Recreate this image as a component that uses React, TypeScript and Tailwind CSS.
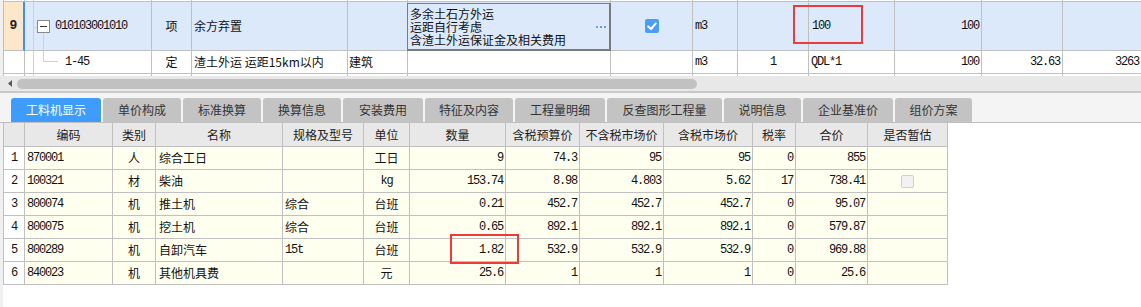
import React from "react";

const CJK = "font-['Noto_Sans_CJK_SC',sans-serif] text-[12px] text-[#111]";
const MONO = "font-['Liberation_Mono','Noto_Sans_CJK_SC',monospace] text-[12px] tracking-[-1.2px] text-[#111]";
const CELL = "border-r border-b border-[#c0c0c0] flex items-center overflow-hidden whitespace-nowrap";
const TOPGRID = "grid grid-cols-[3px_22px_127px_40px_156px_60px_203px_82px_45px_71px_86px_87px_81px_79px]";
const BOTGRID = "grid grid-cols-[3px_22px_88px_43px_127px_81px_46px_96px_74px_84px_89px_43px_72px_80px]";

const tabs: [string, string][] = [
  ["工料机显示", "w-[90px]"],
  ["单价构成", "w-[78px]"],
  ["标准换算", "w-[78px]"],
  ["换算信息", "w-[78px]"],
  ["安装费用", "w-[80px]"],
  ["特征及内容", "w-[88px]"],
  ["工程量明细", "w-[90px]"],
  ["反查图形工程量", "w-[115px]"],
  ["说明信息", "w-[77px]"],
  ["企业基准价", "w-[90px]"],
  ["组价方案", "w-[77px]"],
];

const headers = ["编码", "类别", "名称", "规格及型号", "单位", "数量", "含税预算价", "不含税市场价", "含税市场价", "税率", "合价", "是否暂估"];

const rows = [
  ["1", "870001", "人", "综合工日", "", "工日", "9", "74.3", "95", "95", "0", "855", ""],
  ["2", "100321", "材", "柴油", "", "kg", "153.74", "8.98", "4.803", "5.62", "17", "738.41", "cb"],
  ["3", "800074", "机", "推土机", "综合", "台班", "0.21", "452.7", "452.7", "452.7", "0", "95.07", ""],
  ["4", "800075", "机", "挖土机", "综合", "台班", "0.65", "892.1", "892.1", "892.1", "0", "579.87", ""],
  ["5", "800289", "机", "自卸汽车", "15t", "台班", "1.82", "532.9", "532.9", "532.9", "0", "969.88", ""],
  ["6", "840023", "机", "其他机具费", "", "元", "25.6", "1", "1", "1", "0", "25.6", ""],
];

function VLine() {
  return <div className="absolute left-[8px] top-0 bottom-0 w-px bg-[#fbc98c]" />;
}

function Check() {
  return (
    <div className="w-[14px] h-[14px] rounded-[2px] bg-[#4a9df5] flex items-center justify-center">
      <svg width="14" height="14" viewBox="0 0 14 14">
        <path d="M3.2 7.4 L6 10 L10.8 4.4" stroke="white" strokeWidth="2" fill="none" strokeLinecap="round" strokeLinejoin="round" />
      </svg>
    </div>
  );
}

function TopSection() {
  const emptyCells = (n: number, cls: string) =>
    Array.from({ length: n }).map((_, i) => <div key={i} className={`${CELL} ${cls}`} />);
  return (
    <div className="relative w-[1141px] overflow-hidden">
      {/* previous row sliver */}
      <div className={`${TOPGRID} h-[2px]`}>
        <div className="bg-[#f0f0f0]" />
        <div className={`${CELL} border-l bg-white`} />
        <div className={`${CELL} relative bg-white`}><VLine /></div>
        {emptyCells(11, "bg-white")}
      </div>
      {/* row 9 */}
      <div className={`${TOPGRID} h-[49px]`}>
        <div className="bg-[#f0f0f0]" />
        <div className="border-l border-b border-[#c0c0c0] border-r-2 border-r-[#3d8ff5] bg-[#fde7cb] flex items-center justify-center">
          <span className="font-['Liberation_Mono',monospace] text-[13px] font-bold text-[#222]">9</span>
        </div>
        <div className={`${CELL} relative bg-[#dce9fb] pl-[30px]`}>
          <VLine />
          <div className="absolute left-[8px] top-[25px] w-[4px] h-px bg-[#fbc98c]" />
          <div className="absolute left-[18px] top-[31px] bottom-0 w-px bg-[#fbc98c]" />
          <div className="absolute left-[12px] top-[18px] w-[13px] h-[13px] border border-[#8a8a8a] bg-white flex items-center justify-center">
            <div className="w-[7px] h-px bg-[#333]" />
          </div>
          <span className={MONO}>010103001010</span>
        </div>
        <div className={`${CELL} bg-[#dce9fb] justify-center`}><span className={CJK}>项</span></div>
        <div className={`${CELL} bg-[#dce9fb] pl-[2px]`}><span className={CJK}>余方弃置</span></div>
        <div className={`${CELL} bg-[#dce9fb]`} />
        <div className={`${CELL} bg-[#dce9fb] relative !overflow-visible`}>
          <div className="absolute left-[-1px] top-[1px] right-[-1px] bottom-[-1px] border-2 border-[#7b7b7b] border-l border-t pl-[2px] pt-[3px] flex flex-col">
            <span className={`${CJK} leading-[13px]`}>多余土石方外运</span>
            <span className={`${CJK} leading-[13px]`}>运距自行考虑</span>
            <span className={`${CJK} leading-[13px]`}>含渣土外运保证金及相关费用</span>
            <div className="absolute right-[3px] top-[22px] flex gap-[2px]">
              <div className="w-[2px] h-[2px] bg-[#6a9fd6]" />
              <div className="w-[2px] h-[2px] bg-[#6a9fd6]" />
              <div className="w-[2px] h-[2px] bg-[#6a9fd6]" />
            </div>
          </div>
        </div>
        <div className={`${CELL} bg-[#dce9fb] justify-center`}><Check /></div>
        <div className={`${CELL} bg-[#dce9fb] pl-[2px]`}><span className={MONO}>m3</span></div>
        <div className={`${CELL} bg-[#dce9fb]`} />
        <div className={`${CELL} bg-[#dce9fb] pl-[3px]`}><span className={MONO}>100</span></div>
        <div className={`${CELL} bg-[#dce9fb] justify-end pr-[2px]`}><span className={MONO}>100</span></div>
        <div className={`${CELL} bg-[#dce9fb]`} />
        <div className={`${CELL} bg-[#dce9fb]`} />
      </div>
      {/* row 1-45 */}
      <div className={`${TOPGRID} h-[23px]`}>
        <div className="bg-[#f0f0f0]" />
        <div className={`${CELL} border-l bg-white`} />
        <div className={`${CELL} relative bg-white pl-[40px]`}>
          <VLine />
          <div className="absolute left-[18px] top-0 h-[11px] w-px bg-[#fbc98c]" />
          <div className="absolute left-[18px] top-[10px] w-[15px] h-px bg-[#fbc98c]" />
          <span className={MONO}>1-45</span>
        </div>
        <div className={`${CELL} bg-white justify-center`}><span className={CJK}>定</span></div>
        <div className={`${CELL} bg-white pl-[2px]`}><span className={CJK}>渣土外运 运距15km以内</span></div>
        <div className={`${CELL} bg-white pl-[1px]`}><span className={CJK}>建筑</span></div>
        <div className={`${CELL} bg-white`} />
        <div className={`${CELL} bg-white`} />
        <div className={`${CELL} bg-white pl-[2px]`}><span className={MONO}>m3</span></div>
        <div className={`${CELL} bg-white justify-center`}><span className={MONO}>1</span></div>
        <div className={`${CELL} bg-white pl-[2px]`}><span className={MONO}>QDL*1</span></div>
        <div className={`${CELL} bg-white justify-end pr-[2px]`}><span className={MONO}>100</span></div>
        <div className={`${CELL} bg-white justify-end pr-[2px]`}><span className={MONO}>32.63</span></div>
        <div className={`${CELL} bg-white justify-end pr-[2px]`}><span className={MONO}>3263</span></div>
      </div>
      {/* next row sliver */}
      <div className={`${TOPGRID} h-[2px]`}>
        <div className="bg-[#f0f0f0]" />
        <div className="border-l border-r border-[#c0c0c0] bg-white" />
        <div className="border-r border-[#c0c0c0] relative bg-white"><VLine /></div>
        {Array.from({ length: 11 }).map((_, i) => (
          <div key={i} className="border-r border-[#c0c0c0] bg-white" />
        ))}
      </div>
      {/* horizontal scrollbar */}
      <div className="h-[15px] bg-[#e8e8e8] flex items-center">
        <svg width="4" height="7" viewBox="0 0 4 7" className="ml-[8px]">
          <path d="M4 0 L0 3.5 L4 7 Z" fill="#5a5a5a" />
        </svg>
        <div className="ml-[5px] w-[680px] h-[10px] rounded-full bg-[#c1c1c1]" />
      </div>
      {/* annotation */}
      <div className="absolute left-[793px] top-[5px] w-[70px] h-[39px] border-2 border-[#f03a3a]" />
    </div>
  );
}

function TabBar() {
  return (
    <div className="border-t-2 border-[#c8c8c8] border-b border-b-[#c0c0c0] bg-[#f4f4f4] pt-[5px] pl-[11px] flex gap-[2px]">
      {tabs.map(([t, w], i) => (
        <div
          key={t}
          className={`${w} h-[24px] rounded-t-[3px] flex items-center justify-center font-['Noto_Sans_CJK_SC',sans-serif] text-[12px] ${
            i === 0 ? "bg-[#3f9cff] text-white" : "bg-[#c3c3c3] text-[#333]"
          }`}
        >
          {t}
        </div>
      ))}
    </div>
  );
}

function BottomTable() {
  const numCols = new Set([6, 7, 8, 9, 10, 11]);
  return (
    <div className="flex flex-col">
      <div className={`${BOTGRID} h-[24px]`}>
        <div className="bg-[#f0f0f0]" />
        <div className={`${CELL} border-l bg-[#e8e8e8]`} />
        {headers.map((h) => (
          <div key={h} className={`${CELL} bg-[#e8e8e8] justify-center`}>
            <span className="font-['Noto_Sans_CJK_SC',sans-serif] text-[12px] text-[#222]">{h}</span>
          </div>
        ))}
      </div>
      {rows.map((r) => (
        <div key={r[0]} className={`${BOTGRID} h-[23px]`}>
          <div className="bg-[#f0f0f0]" />
          <div className={`${CELL} border-l bg-white justify-center`}>
            <span className={MONO}>{r[0]}</span>
          </div>
          {r.slice(1).map((v, ci) => {
            const idx = ci + 1;
            if (idx === 12) {
              return (
                <div key={idx} className={`${CELL} bg-[#fffff0] justify-center`}>
                  {v === "cb" ? <div className="w-[13px] h-[13px] rounded-[2px] border border-[#d0d0d0] bg-[#f2f2f2]" /> : null}
                </div>
              );
            }
            if (idx === 1) {
              return (
                <div key={idx} className={`${CELL} bg-[#fffff0] pl-[2px]`}>
                  <span className={MONO}>{v}</span>
                </div>
              );
            }
            if (idx === 2 || idx === 5) {
              return (
                <div key={idx} className={`${CELL} bg-[#fffff0] justify-center`}>
                  <span className={v === "kg" ? MONO : CJK}>{v}</span>
                </div>
              );
            }
            if (idx === 3) {
              return (
                <div key={idx} className={`${CELL} bg-[#fffff0] pl-[3px]`}>
                  <span className={CJK}>{v}</span>
                </div>
              );
            }
            if (idx === 4) {
              return (
                <div key={idx} className={`${CELL} bg-[#fffff0] pl-[2px]`}>
                  <span className={v === "15t" ? MONO : CJK}>{v}</span>
                </div>
              );
            }
            if (numCols.has(idx)) {
              return (
                <div key={idx} className={`${CELL} bg-[#fffff0] justify-end pr-[2px]`}>
                  <span className={MONO}>{v}</span>
                </div>
              );
            }
            return <div key={idx} className={`${CELL} bg-[#fffff0]`} />;
          })}
        </div>
      ))}
    </div>
  );
}

export default function App() {
  return (
    <div className="relative w-[1141px] h-[307px] overflow-hidden bg-white flex flex-col">
      <TopSection />
      <TabBar />
      <BottomTable />
      <div className="flex-1 flex">
        <div className="w-[3px] bg-[#f0f0f0]" />
      </div>
      <div className="absolute left-[450px] top-[234px] w-[69px] h-[30px] border-2 border-[#f03a3a]" />
    </div>
  );
}
